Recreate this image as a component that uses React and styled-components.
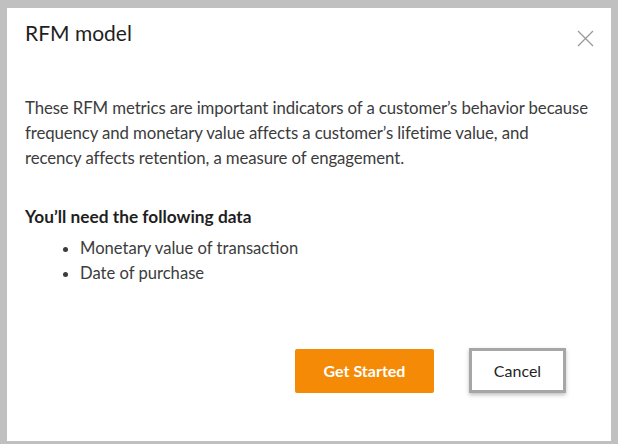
import styled, { createGlobalStyle } from "styled-components";

const Global = createGlobalStyle`
  html, body {
    margin: 0;
    padding: 0;
    background: #c0c0c0;
    font-family: "Lato", "Noto Sans", sans-serif;
  }
`;

const Backdrop = styled.div`
  width: 618px;
  height: 444px;
  padding: 8px 7px 3px 7px;
  box-sizing: border-box;
`;

const Dialog = styled.div`
  position: relative;
  background: #fff;
  height: 100%;
  box-sizing: border-box;
  padding: 11px 18px 0 18px;
  display: flex;
  flex-direction: column;
`;

const Title = styled.h2`
  margin: 0;
  font-size: 21px;
  font-weight: 400;
  color: #1f1f1f;
  line-height: 28px;
`;

const Close = styled.button`
  position: absolute;
  top: 20px;
  right: 16px;
  width: 20px;
  height: 20px;
  padding: 0;
  border: 0;
  background: none;
  display: flex;
  align-items: center;
  justify-content: center;
`;

const Text = styled.p`
  margin: 48px 0 0 0;
  font-size: 16.8px;
  line-height: 25px;
  color: #3c3c3c;
  letter-spacing: -0.1px;
`;

const Heading = styled.h3`
  margin: 35px 0 0 0;
  font-size: 17.3px;
  font-weight: 700;
  color: #1f1f1f;
  line-height: 24px;
`;

const List = styled.ul`
  margin: 7px 0 0 0;
  padding-left: 55px;
  font-size: 16.6px;
  line-height: 25px;
  color: #3c3c3c;
`;

const Footer = styled.div`
  margin-top: auto;
  margin-bottom: 48px;
  display: flex;
  justify-content: flex-end;
  align-items: center;
  gap: 35px;
  padding-right: 27px;
`;

const Primary = styled.button`
  width: 139px;
  height: 44px;
  border: 0;
  border-radius: 2px;
  background: #f58a07;
  color: #fff;
  font-family: inherit;
  font-size: 16px;
  font-weight: 700;
`;

const Secondary = styled.button`
  width: 97px;
  height: 45px;
  box-sizing: border-box;
  border: 3px solid #a6a6a6;
  background: #fff;
  color: #1f1f1f;
  font-family: inherit;
  font-size: 16px;
  box-shadow: 0 2px 4px rgba(0, 0, 0, 0.25);
`;

export default function App() {
  return (
    <>
      <Global />
      <Backdrop>
        <Dialog>
          <Title>RFM model</Title>
          <Close aria-label="Close">
            <svg width="17" height="17" viewBox="0 0 17 17">
              <path d="M1 1L16 16M16 1L1 16" stroke="#999" strokeWidth="1.3" fill="none" />
            </svg>
          </Close>
          <Text>
            These RFM metrics are important indicators of a customer’s behavior because
            frequency and monetary value affects a customer’s lifetime value, and
            <br />
            recency affects retention, a measure of engagement.
          </Text>
          <Heading>You’ll need the following data</Heading>
          <List>
            <li>Monetary value of transaction</li>
            <li>Date of purchase</li>
          </List>
          <Footer>
            <Primary>Get Started</Primary>
            <Secondary>Cancel</Secondary>
          </Footer>
        </Dialog>
      </Backdrop>
    </>
  );
}
